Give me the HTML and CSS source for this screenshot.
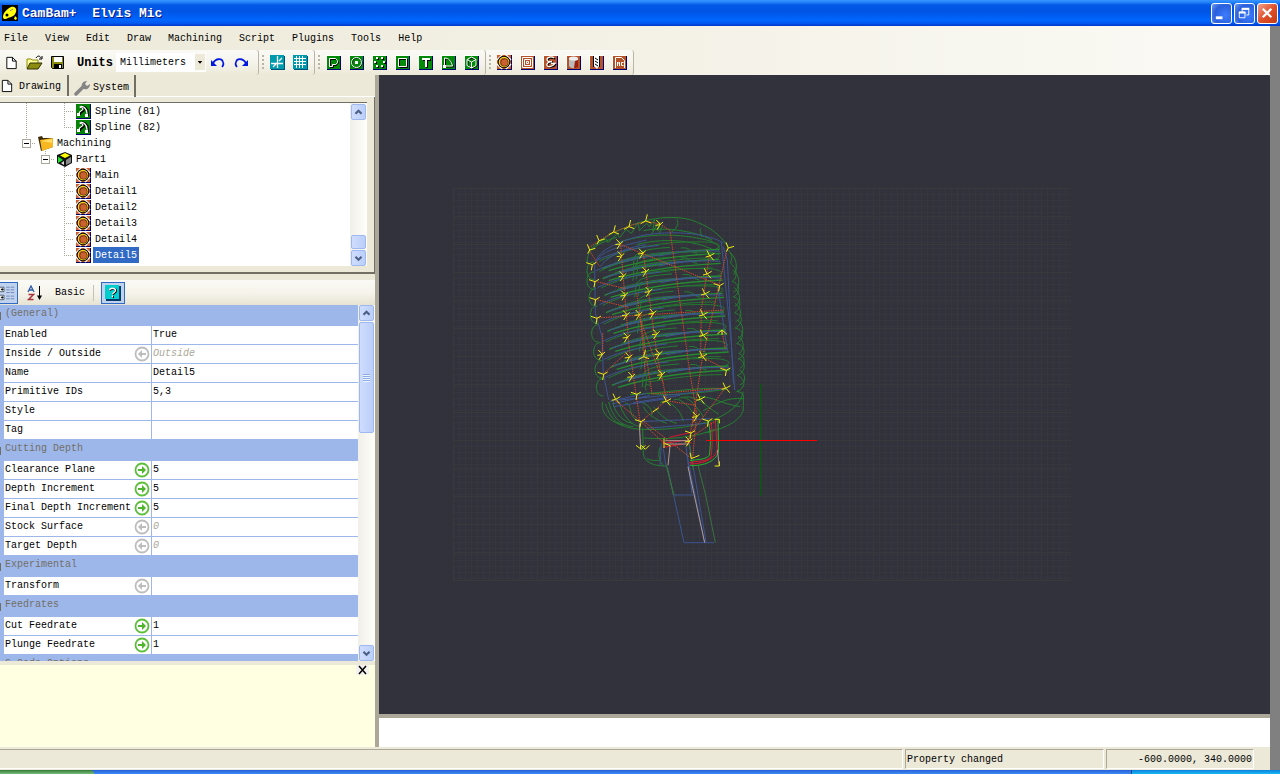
FILE: index.html
```html
<!DOCTYPE html>
<html lang="en">
<head>
<meta charset="utf-8">
<title>CamBam+ Elvis Mic</title>
<link rel="stylesheet" href="styles.css">
</head>
<body>
<svg class="defs" aria-hidden="true">
  <defs>
    <symbol id="page" viewBox="0 0 15 16"><path d="M2.500 2.500h6l4 4v8h-10z" fill="#fff" stroke="#000"/><path d="M8.500 2.500v4h4" fill="none" stroke="#000"/></symbol>
    <symbol id="profile" viewBox="0 0 15 15"><path d="M0 0h15v15H0z" fill="#00006b"/><path d="M0 0h14v14H0z" fill="#cc6030"/><path d="M0 5l5-5M9 0l5 5M0 9l5 5M9 14l5-5" stroke="#fff" stroke-width="1.500"/><circle cx="7" cy="7" r="5.500" fill="#cc6030" stroke="#000" stroke-width="1.500"/><circle cx="7" cy="7" r="4.700" fill="none" stroke="#f8d820" stroke-width="1.200"/><circle cx="7.500" cy="7.500" r="3.800" fill="none" stroke="#5a2c08" stroke-width=".8"/></symbol>
    <symbol id="spline" viewBox="0 0 15 15"><path d="M0 0h15v15H0z" fill="#00006b"/><path d="M0 0h14v14H0z" fill="#078307"/><path d="M4 11c0-4 4-3 4-5s-3-1-3-3c3-2 7 2 7 6v3" fill="none" stroke="#000" stroke-width="2"/><path d="M3 10c0-4 4-3 4-5s-3-1-3-2c3-2 7 2 7 6v2" fill="none" stroke="#fff" stroke-width="1.200"/><path d="M1 9h3v3H1zM9 10h3v3H9z" fill="#fff"/></symbol>
    <symbol id="green" viewBox="0 0 15 15"><path d="M1 1h14v14H1z" fill="#00007b"/><path d="M0 0h14v14H0z" fill="#fff"/><path d="M1 1h13v13H1z" fill="#008a08"/></symbol>
    <symbol id="brown" viewBox="0 0 15 15"><path d="M1 1h14v14H1z" fill="#00007b"/><path d="M0 0h14v14H0z" fill="#fff"/><path d="M1 1h13v13H1z" fill="#b55228"/></symbol>
    <symbol id="up" viewBox="0 0 15 15"><path d="M4 9.500L7.500 6 11 9.500" fill="none" stroke="#4d6185" stroke-width="2.500"/></symbol>
    <symbol id="down" viewBox="0 0 15 15"><path d="M4 6l3.500 3.500L11 6" fill="none" stroke="#4d6185" stroke-width="2.500"/></symbol>
    <symbol id="set" viewBox="0 0 16 16"><circle cx="8" cy="8" r="6.500" fill="#fff" stroke="#5cbf3a" stroke-width="1.800"/><path d="M4 7h4V4l4 4-4 4V9H4z" fill="#4fb52d"/></symbol>
    <symbol id="auto" viewBox="0 0 16 16"><circle cx="8" cy="8" r="6.500" fill="#fff" stroke="#bdbdbd" stroke-width="1.800"/><path d="M12 7H8V4L4 8l4 4V9h4z" fill="#bdbdbd"/></symbol>
  </defs>
</svg>

<div class="app">
  <header class="titlebar">
    <svg class="logo" viewBox="0 0 16 16"><path d="M0 0h16v16H0z" fill="#000"/><path d="M1 12c0-4 4-8 8-10 4-1 6 2 5 5-1 4-5 5-8 6-3 2-5 1-5-1z" fill="#ffff10"/><circle cx="5" cy="10" r="1.500" fill="#000"/><path d="M8 6l3-2" stroke="#888" /><path d="M13 11l2 2-1 2-2-1z" fill="#ffff10"/></svg>
    <h1>CamBam+&nbsp; Elvis Mic</h1>
    <div class="caption">
      <button class="cap" aria-label="Minimize"><svg viewBox="0 0 20 20"><path d="M4 13h7v3H4z" fill="#fff"/></svg></button>
      <button class="cap" aria-label="Restore"><svg viewBox="0 0 20 20"><path d="M7.500 8V5.500h7v6H12" fill="none" stroke="#fff"/><path d="M7 5h8" stroke="#fff" stroke-width="2"/><path d="M4.500 8.500h6v6h-6z" fill="none" stroke="#fff"/><path d="M4 9h7" stroke="#fff" stroke-width="2"/></svg></button>
      <button class="cap close" aria-label="Close"><svg viewBox="0 0 20 20"><path d="M5 5l9 9M14 5l-9 9" stroke="#fff" stroke-width="2.400"/></svg></button>
    </div>
  </header>

  <div class="client">
    <div class="window">
      <nav class="menubar">
        <button>File</button><button>View</button><button>Edit</button><button>Draw</button><button>Machining</button><button>Script</button><button>Plugins</button><button>Tools</button><button>Help</button>
      </nav>

      <div class="toolbars">
        <div class="strip files">
          <button class="tool" aria-label="New"><svg viewBox="0 0 15 16"><use href="#page" width="15" height="16"/></svg></button>
          <button class="tool wide" aria-label="Open"><svg viewBox="0 0 17 15"><path d="M1 13V4h4l1 1h6v3" fill="#ffffa0" stroke="#8c8c00"/><path d="M1 14l3-6h12l-4 6z" fill="#8c8c10" stroke="#303000"/><path d="M10 3c2-3 4-2 5 0M16 1v3h-3" fill="none" stroke="#000"/></svg></button>
          <button class="tool" aria-label="Save"><svg viewBox="0 0 15 15"><path d="M1.500 1.500h12v12h-11l-1-1z" fill="#8c8c10" stroke="#000"/><path d="M4 2h8v5H4z" fill="#fff"/><path d="M4 9h8v5H4z" fill="#000"/><path d="M9 10h2v3H9z" fill="#fff"/></svg></button>
          <label for="units">Units</label>
          <span class="combo"><select id="units"><option>Millimeters</option><option>Inches</option></select><svg class="drop" viewBox="0 0 11 18"><path d="M0 0h11v18H0z" fill="#ece9d8"/><path d="M3 8h5L5.500 11z" fill="#000"/></svg></span>
          <button class="tool" aria-label="Undo"><svg viewBox="0 0 15 15"><path d="M2 8c3-5 9-5 10-1 1 2 0 4-1 5" fill="none" stroke="#0018e0" stroke-width="1.600"/><path d="M0 5v6h6z" fill="#0018e0"/></svg></button>
          <button class="tool redo" aria-label="Redo"><svg viewBox="0 0 15 15"><path d="M13 8C10 3 4 3 3 7c-1 2 0 4 1 5" fill="none" stroke="#0018e0" stroke-width="1.600"/><path d="M15 5v6H9z" fill="#0018e0"/></svg></button>
        </div>
        <div class="strip snap"><i class="grip"></i>
          <button class="tool" aria-label="Show axes"><svg viewBox="0 0 15 15"><path d="M1 1h14v14H1z" fill="#00527b"/><path d="M0 0h14v14H0z" fill="#009aad"/><path d="M7.500 1v12M1 8.500h12M3 12l3-3M9 6l3-3" stroke="#fff" stroke-width="1.300"/></svg></button>
          <button class="tool" aria-label="Show grid"><svg viewBox="0 0 15 15"><path d="M1 1h14v14H1z" fill="#00527b"/><path d="M0 0h14v14H0z" fill="#009aad"/><path d="M3.500 1v12M6.500 1v12M9.500 1v12M1 3.500h12M1 6.500h12M1 9.500h12" stroke="#fff"/></svg></button>
        </div>
        <div class="strip draw"><i class="grip"></i>
          <button class="tool" aria-label="Polyline"><svg viewBox="0 0 15 15"><use href="#green"/><path d="M4.500 12.500v-8h6l2 2v2l-2 2h-3v2z" fill="none" stroke="#000"/><path d="M3.500 11.500v-8h6l2 2v2l-2 2h-3v2z" fill="none" stroke="#fff"/></svg></button>
          <button class="tool" aria-label="Circle"><svg viewBox="0 0 15 15"><use href="#green"/><circle cx="8" cy="8" r="5" fill="none" stroke="#000"/><circle cx="7.500" cy="7.500" r="5" fill="none" stroke="#fff"/><path d="M6 6h3v3H6z" fill="#fff"/></svg></button>
          <button class="tool" aria-label="Point list"><svg viewBox="0 0 15 15"><use href="#green"/><path d="M5 3h2v2H5zM10 3h2v2h-2zM3 7h2v2H3zM12 7h2v2h-2zM5 11h2v2H5zM10 11h2v2h-2z" fill="#000"/><path d="M4 2h2v2H4zM9 2h2v2H9zM2 6h2v2H2zM11 6h2v2h-2zM4 10h2v2H4zM9 10h2v2H9z" fill="#fff"/></svg></button>
          <button class="tool" aria-label="Rectangle"><svg viewBox="0 0 15 15"><use href="#green"/><path d="M4.500 4.500h8v8h-8z" fill="none" stroke="#000"/><path d="M3.500 3.500h8v8h-8z" fill="none" stroke="#fff"/></svg></button>
          <button class="tool" aria-label="Text"><svg viewBox="0 0 15 15"><use href="#green"/><path d="M5 5h8M9 5v8" stroke="#000" stroke-width="2"/><path d="M4 4h8M8 4v8" stroke="#fff" stroke-width="2"/></svg></button>
          <button class="tool" aria-label="Arc"><svg viewBox="0 0 15 15"><use href="#green"/><path d="M4.500 4c4 0 7 3 8 8h-8z" fill="none" stroke="#000"/><path d="M3.500 3c4 0 7 3 8 8h-8z" fill="none" stroke="#fff"/><path d="M2 10h3v3H2z" fill="#fff"/></svg></button>
          <button class="tool" aria-label="Surface"><svg viewBox="0 0 15 15"><use href="#green"/><path d="M8 3l5 3v5l-5 3-4-3V6z" fill="none" stroke="#000"/><path d="M7.500 2l4.500 2.500v6L7.500 13 3 10.500v-6zM3 4.500L7.500 7 12 4.500M7.500 7v6" fill="none" stroke="#fff"/></svg></button>
        </div>
        <div class="strip cam"><i class="grip"></i>
          <button class="tool" aria-label="Profile"><svg viewBox="0 0 15 15"><use href="#profile"/></svg></button>
          <button class="tool" aria-label="Pocket"><svg viewBox="0 0 15 15"><use href="#brown"/><path d="M2.500 2.500h10v10h-10zM4.500 4.500h6v6h-6zM6.500 6.500h2v2h-2z" fill="none" stroke="#fff"/></svg></button>
          <button class="tool" aria-label="Engrave"><svg viewBox="0 0 15 15"><use href="#brown"/><path d="M12 4C9 2 5 3 5 5s2 2 5 2c-3 0-6 2-5 4s6 1 8-2" fill="none" stroke="#000" stroke-width="1.500"/><path d="M11 3C9 1 4 2 4 4.500s3 2 5 2c-3 0-6 2-5 4s6 1 8-2H8" fill="none" stroke="#fff" stroke-width="1.300"/></svg></button>
          <button class="tool" aria-label="3D surface"><svg viewBox="0 0 15 15"><use href="#brown"/><path d="M3 3v8c2 3 7 3 9 0V3z" fill="#bbb"/><path d="M9 6l3-1v7c-1 1-3 1-4 1z" fill="#9c2010"/><ellipse cx="7.500" cy="3.500" rx="4.500" ry="2" fill="#eee"/></svg></button>
          <button class="tool" aria-label="Drill"><svg viewBox="0 0 15 15"><use href="#brown"/><path d="M5 1h5v10l-2 3-3-3z" fill="#fff"/><path d="M6 3l3 2M6 6l3 2M6 9l3 2M10.500 1v11M4.500 1v11" stroke="#000"/></svg></button>
          <button class="tool" aria-label="NC file"><svg viewBox="0 0 15 15"><use href="#brown"/><path d="M3.500 13V2.500h6l3 3V13" fill="none" stroke="#fff"/><path d="M5.500 11V7M7.500 11V7M5.500 8h2M11.500 7.500h-2v3h2" fill="none" stroke="#fff"/></svg></button>
        </div>
      </div>

      <div class="workspace">
        <aside class="side">
          <div class="tabs" role="tablist">
            <button class="tab current" role="tab" aria-selected="true"><svg viewBox="0 0 15 16"><use href="#page"/></svg>Drawing</button>
            <button class="tab" role="tab" aria-selected="false"><svg viewBox="0 0 16 16"><path d="M2 14l7-7" stroke="#858585" stroke-width="3.500" stroke-linecap="round"/><path d="M8 7c-1-3 1-6 5-6l-2 3 2 2 3-2c0 4-3 6-6 5z" fill="#858585"/></svg>System</button>
          </div>
          <div class="treeframe">
            <ul class="tree" role="tree">
              <li role="treeitem"><i class="g v"></i><i class="g"></i><i class="g v h"></i><svg viewBox="0 0 15 15"><use href="#spline"/></svg><span>Spline (81)</span></li>
              <li role="treeitem"><i class="g v"></i><i class="g"></i><i class="g t h"></i><svg viewBox="0 0 15 15"><use href="#spline"/></svg><span>Spline (82)</span></li>
              <li role="treeitem"><i class="g t h"><b></b></i><svg viewBox="0 0 15 15"><path d="M0 1l4-1 1 2h10v9L3 15z" fill="#3f2c08"/><path d="M2 4l13-2v9L4 15z" fill="#f8b720"/><path d="M3 5l11-2v4z" fill="#ffdc63"/></svg><span>Machining</span></li>
              <li role="treeitem"><i class="g"></i><i class="g t h"><b></b></i><svg viewBox="0 0 15 15"><path d="M8 0l7 3v8l-7 4-8-4V3z" fill="#111"/><path d="M8 1l5 2.500-5 2.500-5-2.500z" fill="#ffff00"/><path d="M1 4.500L6 8l-5 3z" fill="#20e030"/><path d="M9 8l5-3v5.500L9 13z" fill="#8a8a8a"/><path d="M4 11l3-2v4z" fill="#ddd"/></svg><span>Part1</span></li>
              <li role="treeitem"><i class="g"></i><i class="g"></i><i class="g v h"></i><svg viewBox="0 0 15 15"><use href="#profile"/></svg><span>Main</span></li>
              <li role="treeitem"><i class="g"></i><i class="g"></i><i class="g v h"></i><svg viewBox="0 0 15 15"><use href="#profile"/></svg><span>Detail1</span></li>
              <li role="treeitem"><i class="g"></i><i class="g"></i><i class="g v h"></i><svg viewBox="0 0 15 15"><use href="#profile"/></svg><span>Detail2</span></li>
              <li role="treeitem"><i class="g"></i><i class="g"></i><i class="g v h"></i><svg viewBox="0 0 15 15"><use href="#profile"/></svg><span>Detail3</span></li>
              <li role="treeitem"><i class="g"></i><i class="g"></i><i class="g v h"></i><svg viewBox="0 0 15 15"><use href="#profile"/></svg><span>Detail4</span></li>
              <li role="treeitem" aria-selected="true"><i class="g"></i><i class="g"></i><i class="g t h"></i><svg viewBox="0 0 15 15"><use href="#profile"/></svg><span class="selected">Detail5</span></li>
            </ul>
            <div class="scroll">
              <button aria-label="Scroll up"><svg viewBox="0 0 15 15"><use href="#up"/></svg></button>
              <i class="track"></i><i class="thumb small"></i>
              <button aria-label="Scroll down"><svg viewBox="0 0 15 15"><use href="#down"/></svg></button>
            </div>
          </div>

          <div class="propbar">
            <button class="pressed first" aria-label="Categorized"><svg viewBox="0 0 16 18"><path d="M-1.500 2.500h5v5h-5zM-1.500 11.500h5v5h-5z" fill="#fff" stroke="#456"/><path d="M0 5h3M1.500 3.500v3M0 14h3M1.500 12.500v3" stroke="#000"/><path d="M6 2.500h4M6 5.500h4M6 8.500h4M6 12.500h4M6 15.500h4M11 2.500h4M11 5.500h4M11 8.500h4M11 12.500h4M11 15.500h4" stroke="#6683b5"/></svg></button>
            <button class="sort" aria-label="Alphabetical"><svg viewBox="0 0 16 16"><path d="M1 7l3-6 3 6M2 5h4" fill="none" stroke="#2d5aa8" stroke-width="1.300"/><path d="M1.500 9.500h5l-5 5h5" fill="none" stroke="#a8323c" stroke-width="1.500"/><path d="M12.500 1v12" stroke="#000"/><path d="M10 10.500h5L12.500 15z" fill="#000"/></svg></button>
            <button class="basic">Basic</button>
            <i class="sep"></i>
            <button class="pressed" aria-label="Help"><svg viewBox="0 0 16 16"><path d="M1 1h15v15H1z" fill="#003a6b"/><path d="M0 0h14v14H0z" fill="#00cdcd"/><path d="M5 6c0-3 6-3 6 0 0 2-3 2-3 4M8 11v2" fill="none" stroke="#000" stroke-width="2"/><path d="M4.500 5.500c0-3 6-3 6 0 0 2-3 2-3 4M7.500 10.500v2" fill="none" stroke="#fff" stroke-width="1.300"/></svg></button>
          </div>

          <div class="props">
            <div class="clip">
            <table>
              <colgroup><col class="gutter"><col class="name"><col></colgroup>
              <tbody>
                <tr class="cat"><th></th><th colspan="2">(General)</th></tr>
                <tr><td></td><th>Enabled</th><td>True</td></tr>
                <tr><td></td><th><div>Inside / Outside<svg viewBox="0 0 16 16"><use href="#auto"/></svg></div></th><td class="dim">Outside</td></tr>
                <tr><td></td><th>Name</th><td>Detail5</td></tr>
                <tr><td></td><th>Primitive IDs</th><td>5,3</td></tr>
                <tr><td></td><th>Style</th><td></td></tr>
                <tr><td></td><th>Tag</th><td></td></tr>
                <tr class="cat"><th></th><th colspan="2">Cutting Depth</th></tr>
                <tr><td></td><th><div>Clearance Plane<svg viewBox="0 0 16 16"><use href="#set"/></svg></div></th><td>5</td></tr>
                <tr><td></td><th><div>Depth Increment<svg viewBox="0 0 16 16"><use href="#set"/></svg></div></th><td>5</td></tr>
                <tr><td></td><th><div>Final Depth Increment<svg viewBox="0 0 16 16"><use href="#set"/></svg></div></th><td>5</td></tr>
                <tr><td></td><th><div>Stock Surface<svg viewBox="0 0 16 16"><use href="#auto"/></svg></div></th><td class="dim">0</td></tr>
                <tr><td></td><th><div>Target Depth<svg viewBox="0 0 16 16"><use href="#auto"/></svg></div></th><td class="dim">0</td></tr>
                <tr class="cat"><th></th><th colspan="2">Experimental</th></tr>
                <tr><td></td><th><div>Transform<svg viewBox="0 0 16 16"><use href="#auto"/></svg></div></th><td></td></tr>
                <tr class="cat"><th></th><th colspan="2">Feedrates</th></tr>
                <tr><td></td><th><div>Cut Feedrate<svg viewBox="0 0 16 16"><use href="#set"/></svg></div></th><td>1</td></tr>
                <tr><td></td><th><div>Plunge Feedrate<svg viewBox="0 0 16 16"><use href="#set"/></svg></div></th><td>1</td></tr>
                <tr class="cat"><th></th><th colspan="2">G-Code Options</th></tr>
              </tbody>
            </table>
            </div>
            <div class="scroll">
              <button aria-label="Scroll up"><svg viewBox="0 0 15 15"><use href="#up"/></svg></button>
              <i class="thumb large"></i><i class="track"></i>
              <button aria-label="Scroll down"><svg viewBox="0 0 15 15"><use href="#down"/></svg></button>
            </div>
          </div>
          <div class="hint"><button aria-label="Close help"><svg viewBox="0 0 13 10"><path d="M3 1l7 8M10 1L3 9" stroke="#000" stroke-width="1.500"/></svg></button></div>
        </aside>

        <main class="view">
          <div class="canvas">
            <svg width="891" height="639" viewBox="379 75 891 639" fill="none">
              <defs>
                <pattern id="mesh" x="453" y="188" width="6" height="6" patternUnits="userSpaceOnUse"><path d="M.5 0v6M0 .5h6" stroke="#36373e"/></pattern>
                <pattern id="mesh10" x="453" y="188" width="84" height="28" patternUnits="userSpaceOnUse"><path d="M.5 0v28M0 .5h84" stroke="#38393d"/></pattern>
                <g id="rib">
                  <path d="M-4-6C-32-8-32 48-4 46" stroke="#23802f"/>
                  <path d="M22 14C90-16 230-40 372-44M40 20C130-8 240-26 376-32" stroke="#258a31" stroke-width="4"/>
                  <path d="M12-8C90-48 210-70 330-66C370-64 384-54 362-46M60-4C110-22 160-32 230-36M130 4C190-4 250-18 352-18" stroke="#23782f"/>
                  <path d="M112 20c6-18-4-44 20-54 20-10 60-14 92-16M122 16c6-14 0-34 12-42M256-48c30-4 24 12 50 16" stroke="#237e31"/>
                  <path d="M2-10C60-38 120-48 190-56M70-6C150-28 220-36 300-40M190-24C260-38 320-42 374-38M30 10C60 0 90-8 120-14" stroke="#3d5592"/>
                </g>
                <path id="right" d="M-11-14L1-1L-9 15M-14 2L0 0L9-8" stroke="#eded12"/>
                <path id="left" d="M-9-17L-1 0L-13 3M-1 0L13-8M1 1L11 13" stroke="#eded12"/>
                <path id="side" d="M-17-5L1 1L13-6M1 1L-2 18" stroke="#eded12"/>
                <path id="rim" d="M-6-19L1-2L18-7M1-2L-5 9" stroke="#eded12"/>
                <path id="rimr" d="M4-20L-1 0L-16 8M-1 0L15 6" stroke="#eded12"/>
              </defs>
              <path d="M453 188h618v393H453z" fill="url(#mesh)"/><path d="M453 188h618v393H453z" fill="url(#mesh10)"/>
              <svg x="580" y="210" width="170" height="340" viewBox="0 0 510 1020" stroke-width="3">
                <g stroke="#23812f">
                  <path d="M28 122C50 92 110 60 170 40C240 16 310 18 350 36C400 56 430 84 446 116M22 160C18 120 50 100 110 82M190 62C240 50 340 60 396 90M290 28c8 10 4 26-16 38M365 55c-10 4 0 14 0 26M118 96C180 76 270 64 380 90C420 100 424 118 410 126M170 104C240 84 340 88 400 120M52 100l26-14 6 12 26-26 10 10 18-24 16 12 20-32 4 24 22-22 8 10 16-22-6 34 22-26-6 28M230 46l-14 26M248 46l-10 24"/>
                  <path d="M440 120C466 130 452 150 452 160C478 180 468 210 456 214C486 224 478 254 460 260C492 272 478 300 464 308C500 320 480 346 466 354C500 364 488 390 470 400C504 410 494 442 474 446C504 454 494 490 472 496C506 512 490 540 470 544C500 550 488 560 490 600C480 630 450 650 380 668"/>
                  <path d="M450 130C470 140 476 180 460 194M458 180C486 200 478 240 460 246M462 232C484 250 484 280 464 288M466 280C490 300 484 326 470 334M470 330C494 340 494 378 474 386M474 378C500 396 488 428 476 430M476 430C502 440 492 472 480 474M478 480C500 490 498 520 480 524"/>
                  <path d="M68 576C60 610 90 640 160 656C240 664 340 652 400 630C440 612 480 590 490 545M76 582C84 600 96 640 130 644M86 576C96 610 110 646 160 650M100 574C96 590 120 636 158 640M120 584C130 620 160 650 176 648M136 580C160 580 140 620 178 634M180 576C200 580 220 600 216 616M190 590C200 610 220 626 260 640M220 590C240 610 250 630 290 640M240 580C250 560 300 590 310 634M280 570C300 560 330 590 350 626M296 566C320 550 350 590 370 620M310 562C350 552 390 600 416 612M370 602C400 586 440 560 490 566M358 560C400 560 420 580 480 590M200 540C190 530 196 520 210 526M200 550C290 560 370 546 440 538M150 554C240 550 360 530 430 536"/>
                  <path d="M188 655L190 730C190 760 230 768 252 768M200 745C210 754 230 750 238 752M190 684C280 690 350 680 404 658M240 712C230 740 244 766 256 770"/>
                </g>
                <use href="#rib" x="46" y="162"/><use href="#rib" x="46" y="192"/><use href="#rib" x="52" y="242"/><use href="#rib" x="56" y="294"/><use href="#rib" x="60" y="350"/><use href="#rib" x="66" y="404"/><use href="#rib" x="70" y="458"/><use href="#rib" x="74" y="512"/>
                <g stroke="#3c5490">
                  <path d="M46 160C52 120 120 92 190 76C270 62 370 66 430 98M54 150C60 124 130 106 200 90M60 170C90 130 150 110 200 104M44 160l2 150 20 70 4 110 16 80M424 96L454 400 464 540M430 110L442 150 460 520M412 220l30 200M90 574L200 550M96 582L210 556M100 590L260 566M160 578L300 556M120 570L300 552 440 535M176 635L390 626M200 655L380 640"/>
                  <path d="M262 770L312 998h90M280 855h60M320 730L374 998M326 690L378 996M244 700L240 768M250 716L258 770M318 710L336 850"/>
                </g>
                <path d="M354 766L378 860 406 998M258 764L282 856M326 690L340 780M262 774l18 80" stroke="#37733e"/>
                <path d="M384 635C396 670 390 720 388 736C376 750 350 748 330 752M414 630L416 720C414 752 370 770 330 766" stroke="#20b82a"/>
                <path d="M392 636C400 670 396 730 392 742C380 756 350 752 328 758M406 632L412 720C408 740 380 762 330 762M244 690L256 706M268 682L330 668M248 700L326 690M250 712L310 702M320 698h14" stroke="#dc1730"/>
                <path d="M178 640l4 76M256 692h72M256 702h70M270 708L264 766M412 720l6 48M324 770L374 998" stroke="#b19a94"/>
                <g stroke="#e04a28" stroke-dasharray="4 3"><path d="M28 122L58 168M28 112L60 90L102 66L146 48L200 34L240 42L270 62L330 490L350 610L338 745M118 102L418 225M122 106L146 400L180 634M190 130L232 440L260 570M442 115L366 450L336 650M388 135L364 300L362 440M50 324L430 300M46 214L136 236M46 268L146 292M170 250L216 552L436 534L332 670M180 314L196 490M178 320L250 520M68 370V430M70 492L144 424M366 440L440 480M426 364L436 416M104 570L180 632L244 692M186 630L334 745M186 632L258 572L348 586M414 628L320 690M346 600L326 690"/></g>
                <use href="#rim" x="28" y="122"/><use href="#rim" x="56" y="94"/><use href="#rimr" x="102" y="66"/><use href="#rimr" x="148" y="50"/><use href="#rimr" x="198" y="33"/><use href="#right" x="240" y="44"/><use href="#side" x="36" y="163"/><use href="#side" x="44" y="214"/><use href="#side" x="46" y="268"/><use href="#side" x="50" y="324"/><use href="#right" x="66" y="434"/><use href="#side" x="70" y="492"/><use href="#left" x="108" y="568"/>
                <use href="#right" x="120" y="102"/><use href="#right" x="124" y="138"/><use href="#right" x="130" y="198"/><use href="#right" x="135" y="256"/><use href="#right" x="140" y="315"/><use href="#right" x="142" y="382"/><use href="#right" x="148" y="442"/><use href="#right" x="156" y="500"/><use href="#side" x="170" y="552"/><use href="#side" x="182" y="634"/>
                <use href="#right" x="188" y="130"/><use href="#right" x="198" y="185"/><use href="#right" x="208" y="245"/><use href="#right" x="220" y="310"/><use href="#right" x="230" y="372"/><use href="#right" x="238" y="432"/><use href="#right" x="246" y="494"/><use href="#left" x="260" y="574"/><use href="#right" x="178" y="314"/><use href="#rimr" x="192" y="440"/>
                <use href="#left" x="390" y="138"/><use href="#left" x="382" y="192"/><use href="#left" x="376" y="252"/><use href="#left" x="370" y="315"/><use href="#left" x="370" y="376"/><use href="#left" x="368" y="440"/><use href="#side" x="418" y="226"/><path d="M412 372l14-12 14 12M426 360v14" stroke="#eded12"/><use href="#rim" x="444" y="116"/><use href="#side" x="438" y="480"/><use href="#left" x="438" y="535"/><use href="#left" x="362" y="568"/><use href="#right" x="350" y="620"/><use href="#side" x="384" y="632"/><use href="#side" x="332" y="668"/><use href="#right" x="328" y="694"/>
                <path d="M168 706l16 12 12-12M184 706l12 12 12-12M182 718v-12M404 628h14v12M404 768h14v-14M252 686v28M254 700l18 8M330 728l4 18 24-10M218 606l18-12" stroke="#eded12"/>
              </svg>
              <path d="M761 384v112" stroke="#144f1b" stroke-width="2"/><path d="M706 440.500h111" stroke="#ff0000"/>
            </svg>
          </div>
          <div class="log"></div>
        </main>
      </div>

      <footer class="status"><span class="pane grow"></span><span class="pane message">Property changed</span><span class="pane coords">-600.0000, 340.0000</span></footer>
    </div>
    <div class="edge"></div>
  </div>
  <div class="taskbar"><i class="start"></i><i class="tasks"></i><i class="tray"></i></div>
</div>
</body>
</html>
```
FILE: styles.css
```css
* { box-sizing: border-box; }
html, body { height: 100%; }
body { margin: 0; font: 10px/16px "Liberation Mono", "DejaVu Sans Mono", monospace; color: #000; background: #ece9d8; }
button { font: inherit; color: inherit; background: none; border: 0; padding: 0; }
svg { display: block; flex: none; }
i { display: block; flex: none; font-style: normal; }
.defs { position: absolute; width: 0; height: 0; }

.app { height: 100vh; display: flex; flex-direction: column; overflow: hidden; }

.titlebar { flex: none; height: 26px; display: flex; align-items: center; gap: 4px; padding: 0 2px; background: linear-gradient(#3a93ff 0, #2587fb 2px, #0458e6 5px, #0055e5 12px, #0066ff 20px, #005bf2 23px, #0036c8 26px); }
.logo { width: 16px; height: 16px; }
.titlebar h1 { margin: 0; padding-top: 2px; flex: 1; font-size: 13px; line-height: 20px; font-weight: bold; color: #fff; text-shadow: 1px 1px #0a1883; white-space: pre; }
.caption { display: flex; gap: 2px; }
.cap { width: 21px; height: 21px; border: 1px solid #fff; border-radius: 3px; background: radial-gradient(circle at 70% 60%, #3c7dff, #2a5fdc 60%, #6f98ee); }
.cap svg { width: 19px; height: 19px; }
.close { background: linear-gradient(135deg, #f0a18c, #e0512b 50%, #c53a12); }

.client { flex: 1; min-height: 0; display: flex; }
.window { flex: 1; min-width: 0; display: flex; flex-direction: column; }
.edge { flex: none; width: 10px; background: #808080; }

.menubar { flex: none; height: 24px; display: flex; gap: 17px; padding: 2px 4px 0; align-items: center; background: linear-gradient(90deg, #ece9d8, #fbfaf5); }
.toolbars { flex: none; height: 25px; display: flex; background: linear-gradient(90deg, #ece9d8, #fbfaf5); }
.strip { display: flex; align-items: center; gap: 8px; padding-right: 6px; border-right: 1px solid #b8b5a5; border-radius: 0 3px 3px 0; background: linear-gradient(#fbfaf6, #f4f2e8 60%, #ece9d8); }
.files { padding: 0 8px 0 4px; width: 259px; }
.tool { flex: none; }
.tool svg { width: 15px; height: 15px; }
.tool.wide svg { width: 17px; }
.files .tool + .tool { margin-left: -1px; }
.files label { font-size: 12px; font-weight: bold; margin-left: 4px; width: 31px; }
.combo { display: grid; grid-template-columns: 1fr 11px; width: 90px; height: 19px; background: #fff; margin-right: -3px; }
.combo select { grid-area: 1 / 1 / 2 / 3; appearance: none; border: 0; padding: 0 0 0 4px; background: #fff; font: inherit; color: inherit; border-radius: 0; min-width: 0; }
.drop { grid-area: 1 / 2; width: 10px; height: 18px; pointer-events: none; }
.grip { width: 2px; height: 15px; margin-left: 3px; background: repeating-linear-gradient(#b8b5a5 0 2px, transparent 2px 4px); }
.snap .grip, .draw .grip, .cam .grip { margin-right: -2px; }

.workspace { flex: 1; min-height: 0; display: flex; }
.side { flex: none; width: 379px; border-right: 4px solid #aca899; display: flex; flex-direction: column; }

.tabs { flex: none; height: 22px; display: flex; align-items: flex-start; border-bottom: 1px solid #fff; }
.tab { display: flex; align-items: center; gap: 3px; height: 22px; border-right: 2px solid #716f64; padding: 4px 5px 0 5px; }
.tab svg { width: 16px; height: 16px; }
.tab.current { height: 21px; padding: 2px 6px 0 0; gap: 5px; }
.tab.current svg { width: 14px; height: 15px; margin-bottom: 2px; }

.treeframe { flex: none; height: 177px; display: flex; padding: 5px 7px 6px 0; border: solid #716f64; border-width: 0 1px 2px 0; }
.tree { flex: 1; margin: 0; padding: 0; list-style: none; background: #fff; border: solid #716f64; border-width: 1px 0 0; }
.tree li { display: flex; align-items: center; height: 16px; padding-left: 17px; white-space: pre; }
.tree li > svg { width: 15px; height: 15px; margin: 0 3px 0 2px; }
.tree li > span { padding: 1px 2px 0; margin-left: -1px; height: 16px; line-height: 16px; }
.tree .selected { background: #316ac5; color: #fff; }
.g { width: 19px; height: 16px; display: grid; place-items: center; background-repeat: no-repeat; --d: repeating-linear-gradient(#aca899 0 1px, transparent 1px 2px); --e: repeating-linear-gradient(90deg, #aca899 0 1px, transparent 1px 2px); }
.v { background-image: var(--d); background-size: 1px 16px; background-position: 9px 0; }
.v.h { background-image: var(--d), var(--e); background-size: 1px 16px, 10px 1px; background-position: 9px 0, 9px 8px; }
.t.h { background-image: var(--d), var(--e); background-size: 1px 8px, 10px 1px; background-position: 9px 0, 9px 8px; }
.g b { width: 9px; height: 9px; border: 1px solid #aca899; background: linear-gradient(#000, #000) center / 5px 1px no-repeat #fff; }

.scroll { flex: none; width: 17px; display: flex; flex-direction: column; background: linear-gradient(90deg, #f0efe8, #fefefb); }
.treeframe .scroll { padding-top: 1px; border-top: 1px solid #716f64; }
.scroll button, .thumb { width: 15px; height: 16px; margin: 0 1px; border: 1px solid #9db9f0; border-radius: 2px; background: linear-gradient(90deg, #cfdcfe, #bbcffa); }
.scroll button svg { width: 13px; height: 14px; }
.track { flex: 1; }
.thumb.small { height: 14px; margin-bottom: 1px; }
.thumb.large { height: 111px; margin-top: 1px; background: repeating-linear-gradient(#8caae6 0 1px, #eef4fe 1px 2px) center / 7px 8px no-repeat, linear-gradient(90deg, #cfdcfe, #bbcffa); }

.propbar { flex: none; height: 25px; margin-top: 6px; display: flex; align-items: center; background: linear-gradient(#fbfaf6, #f4f2e8 60%, #e6e3d2); }
.propbar svg { width: 16px; height: 16px; }
.pressed { height: 22px; padding: 0 3px; border: 1px solid #316ac5; background: #c1d2ee; }
.pressed.first { padding: 0 1px 0 0; border-left: 0; }
.sort { margin-left: 9px; }
.basic { margin-left: 12px; padding-top: 1px; }
.sep { width: 1px; height: 16px; margin: 0 7px 0 8px; background: #c5c2b2; }

.props { flex: 1; min-height: 0; display: flex; }
.clip { flex: 1; min-width: 0; overflow: hidden; background: #9eb7eb; }
table { width: 100%; border-collapse: separate; border-spacing: 0; table-layout: fixed; }
.gutter { width: 4px; }
.name { width: 148px; }
th, td { height: 19px; padding: 0 0 1px 1px; font-weight: normal; text-align: left; line-height: 16px; background: #fff; border-bottom: 1px solid #9eb7eb; white-space: nowrap; }
tr > :first-child { background: #9eb7eb; padding: 0; }
tbody th:nth-child(2) { border-right: 1px solid #9eb7eb; }
th div { display: flex; justify-content: space-between; align-items: center; height: 16px; }
th svg { width: 16px; height: 16px; margin-right: 1px; }
.cat th { height: 21px; padding: 0 0 2px 1px; background: #9eb7eb; color: #716f64; }
.cat > :first-child { background: linear-gradient(#716f64, #716f64) 0 7px / 1px 8px no-repeat #9eb7eb; }
.dim { color: #aca899; font-style: italic; }

.hint { flex: none; height: 86px; border-top: 4px solid #ece9d8; background: #ffffe1; display: flex; justify-content: flex-end; align-items: flex-start; padding-right: 6px; }
.hint button { background: #f4f2ee; }
.hint svg { width: 13px; height: 10px; }

.view { flex: 1; min-width: 0; display: flex; flex-direction: column; }
.canvas { flex: 1; min-height: 0; overflow: hidden; background: #32323c; }
.log { flex: none; height: 33px; border-top: 4px solid #aca899; background: #fff; }

.status { flex: none; height: 23px; display: flex; gap: 2px; padding: 2px 16px 1px 0; background: #ece9d8; }
.pane { border: 1px solid #fff; border-top-color: #aca899; border-left-color: #aca899; padding: 2px 1px 0; white-space: pre; }
.grow { flex: 1; border-left: 0; }
.message { width: 199px; }
.coords { width: 148px; text-align: right; }

.taskbar { flex: none; height: 4px; display: flex; background: linear-gradient(#245edb, #3f8cf3); }
.start { width: 94px; background: linear-gradient(#2f7a35, #7dbb7c); border-radius: 0 4px 0 0; }
.tasks { flex: 1; }
.tray { width: 149px; background: linear-gradient(#0c7fdb, #19b9f3); border-left: 1px solid #0a4a9a; }
```
